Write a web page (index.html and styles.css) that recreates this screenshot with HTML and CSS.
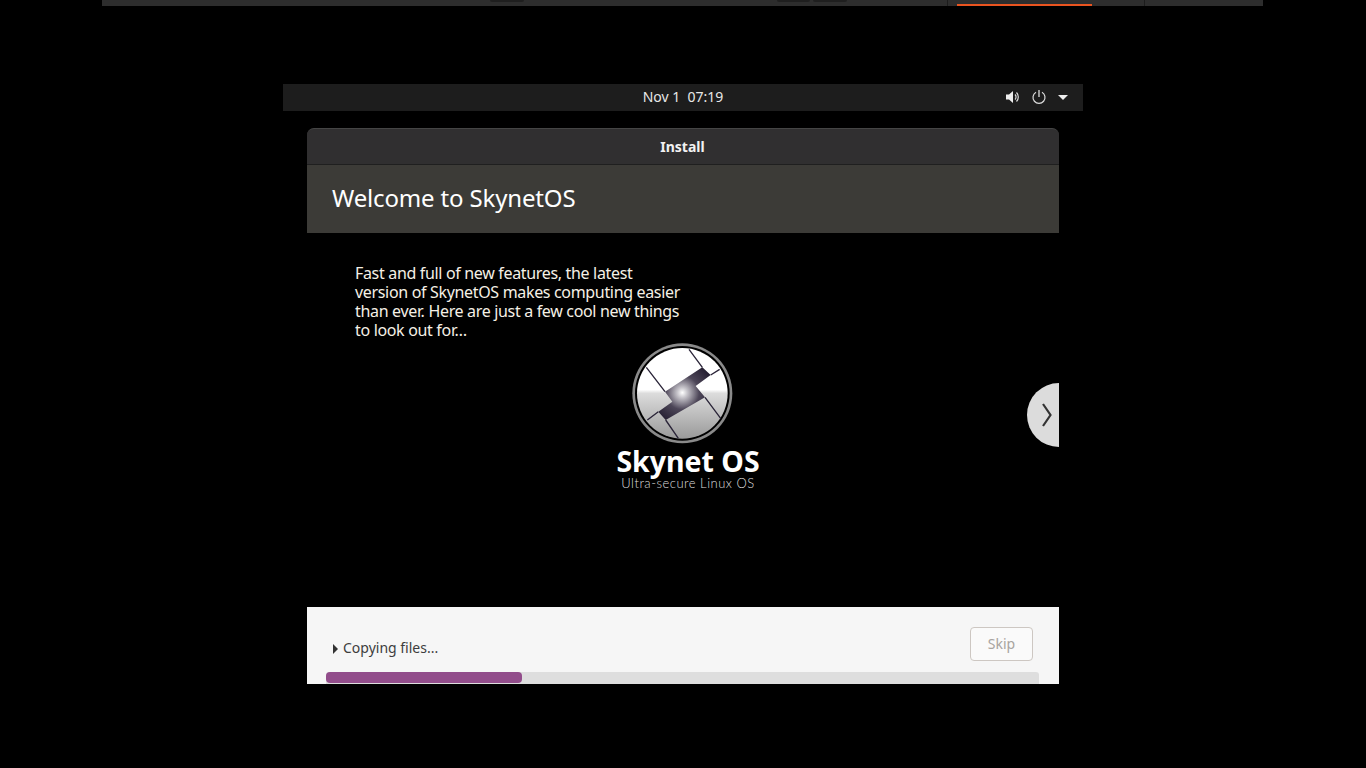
FILE: index.html
```html
<!DOCTYPE html>
<html lang="en">
<head>
    <meta charset="UTF-8">
    <title>Install - SkynetOS</title>
    <link rel="stylesheet" href="styles.css">
</head>
<body>

    <div class="top-strip">
        <div class="notch notch-a"></div>
        <div class="notch notch-b"></div>
        <div class="notch notch-c"></div>
        <div class="tab-box"></div>
        <div class="active-tab"></div>
    </div>

    <div class="screen">
        <div class="panel">
            <span class="clock">Nov 1&nbsp; 07:19</span>
            <div class="tray">
                <svg width="16" height="16" viewBox="0 0 16 16">
                    <path d="M1 5.5h3L8 2v12L4 10.5H1z" fill="#eee"/>
                    <path d="M10 5.5a3.5 3.5 0 0 1 0 5M11.5 3.5a6.5 6.5 0 0 1 0 9" fill="none" stroke="#ddd" stroke-width="1.2"/>
                </svg>
                <svg width="16" height="16" viewBox="0 0 16 16">
                    <path d="M5 3.2a6 6 0 1 0 6 0" fill="none" stroke="#ddd" stroke-width="1.2"/>
                    <path d="M8 1v7" fill="none" stroke="#eee" stroke-width="1.2"/>
                </svg>
                <span class="caret"></span>
            </div>
        </div>

        <div class="window">
            <div class="titlebar">Install</div>
            <div class="page-head">Welcome to SkynetOS</div>

            <div class="slide">
                <p class="slide-text">Fast and full of new features, the latest version of SkynetOS makes computing easier than ever. Here are just a few cool new things to look out for…</p>

                <div class="logo">
                    <svg class="logo-mark" width="108" height="106" viewBox="0 0 324 318">
                        <defs>
                            <linearGradient id="disc" x1="0" y1="0" x2="0" y2="1">
                                <stop offset="0" stop-color="#fff"/>
                                <stop offset="0.46" stop-color="#fff"/>
                                <stop offset="0.5" stop-color="#dcdcdc"/>
                                <stop offset="1" stop-color="#9a9a9a"/>
                            </linearGradient>
                            <radialGradient id="glow" gradientUnits="userSpaceOnUse" cx="160" cy="158" r="105">
                                <stop offset="0" stop-color="#fff"/>
                                <stop offset="0.14" stop-color="#c8c6cc"/>
                                <stop offset="0.48" stop-color="#4d4658"/>
                                <stop offset="1" stop-color="#1f192c"/>
                            </radialGradient>
                        </defs>
                        <circle cx="160" cy="160" r="150" fill="#8a8a8a"/>
                        <circle cx="160" cy="160" r="142" fill="#000"/>
                        <circle cx="160" cy="160" r="136" fill="url(#disc)"/>
                        <path d="M220 82L245 105L200 138L228 172L110 240L88 215L130 185L108 155z" fill="url(#glow)"/>
                        <path d="M52 82L108 155M180 28L220 82M245 105L272 88M88 215L55 240M110 240L148 295M228 172L275 235" fill="none" stroke="#2a2438" stroke-width="4"/>
                    </svg>
                    <div class="logo-name">Skynet OS</div>
                    <div class="logo-tag">Ultra-secure Linux OS</div>
                </div>

                <div class="next-btn">
                    <svg width="12" height="26" viewBox="0 0 12 26">
                        <path d="M2 2L9.5 13L2 24" fill="none" stroke="#333" stroke-width="2.2"/>
                    </svg>
                </div>
            </div>

            <div class="footer">
                <div class="footer-row">
                    <div class="progress-label"><span class="arrow"></span>Copying files...</div>
                    <button class="skip-btn">Skip</button>
                </div>
                <div class="progress">
                    <div class="progress-fill" style="width: 27.5%"></div>
                </div>
            </div>
        </div>
    </div>

</body>
</html>
```

FILE: styles.css
```css
* {
    box-sizing: border-box;
    margin: 0;
    padding: 0;
}

body {
    font-family: "Noto Sans", sans-serif;
    background-color: #000;
    color: #fff;
    overflow: hidden;
}

.top-strip {
    position: relative;
    width: 1161px;
    height: 6px;
    margin-left: 102px;
    background-color: #2d2d2d;
}

.notch {
    position: absolute;
    top: 0;
    height: 2px;
    background-color: #1f1f1f;
    border-radius: 0 0 4px 4px;
}

.notch-a {
    left: 388px;
    width: 34px;
}

.notch-b {
    left: 675px;
    width: 33px;
}

.notch-c {
    left: 711px;
    width: 34px;
}

.tab-box {
    position: absolute;
    left: 845px;
    top: 0;
    width: 198px;
    height: 6px;
    border-left: 1px solid #1c1c1c;
    border-right: 1px solid #1c1c1c;
}

.active-tab {
    position: absolute;
    left: 855px;
    bottom: 0;
    width: 135px;
    height: 2px;
    background-color: #e95420;
}

.screen {
    width: 800px;
    margin: 78px auto 0;
}

.panel {
    position: relative;
    display: flex;
    align-items: center;
    justify-content: center;
    height: 27px;
    padding-bottom: 2px;
    background-color: #1d1d1d;
    font-size: 14px;
    color: #e8e8e8;
}

.tray {
    position: absolute;
    right: 15px;
    top: 0;
    height: 26px;
    display: flex;
    align-items: center;
    gap: 10px;
}

.caret {
    width: 0;
    height: 0;
    margin-left: 1px;
    border-left: 5px solid transparent;
    border-right: 5px solid transparent;
    border-top: 5px solid #eee;
}

.window {
    width: 752px;
    margin: 17px auto 0;
}

.titlebar {
    height: 37px;
    line-height: 36px;
    text-align: center;
    font-size: 14px;
    font-weight: 700;
    color: #f2f2f2;
    padding-right: 1px;
    background-color: #302f30;
    border-top: 1px solid #454545;
    border-bottom: 1px solid #1f1f1f;
    border-radius: 7px 7px 0 0;
}

.page-head {
    height: 68px;
    line-height: 65px;
    padding-left: 25px;
    font-size: 24px;
    letter-spacing: -0.16px;
    background-color: #3c3b37;
}

.slide {
    position: relative;
    height: 374px;
    background-color: #000;
}

.slide-text {
    width: 330px;
    padding: 31px 0 0 48px;
    box-sizing: content-box;
    font-size: 16px;
    line-height: 19px;
    letter-spacing: -0.33px;
    color: #f5f0e6;
}

.logo {
    display: flex;
    flex-direction: column;
    align-items: center;
    margin-top: 0;
    margin-left: 10px;
}

.logo-mark {
    margin-left: -11px;
}

.logo-name {
    font-size: 28.5px;
    line-height: 30px;
    font-weight: 700;
    color: #fff;
}

.logo-tag {
    font-family: "Lato", sans-serif;
    font-weight: 300;
    font-size: 13px;
    line-height: 14px;
    letter-spacing: 0.5px;
    color: #ddd;
}

.next-btn {
    position: absolute;
    right: 0;
    top: 150px;
    width: 32px;
    height: 64px;
    padding-left: 8px;
    display: flex;
    align-items: center;
    justify-content: center;
    background-color: #dcdcdc;
    border-radius: 32px 0 0 32px;
}

.footer {
    height: 77px;
    padding: 20px 20px 0 19px;
    background-color: #f6f6f6;
}

.footer-row {
    display: flex;
    justify-content: space-between;
    align-items: flex-start;
    height: 45px;
    margin-right: 6px;
}

.progress-label {
    display: flex;
    align-items: center;
    margin-top: 11px;
    padding-left: 6px;
    font-size: 14px;
    color: #3d3d3d;
}

.arrow {
    width: 0;
    height: 0;
    margin: 2px 5px 0 1px;
    border-top: 5px solid transparent;
    border-bottom: 5px solid transparent;
    border-left: 5px solid #333;
}

.skip-btn {
    width: 63px;
    height: 34px;
    padding-bottom: 2px;
    font-family: "Noto Sans", sans-serif;
    font-size: 14px;
    color: #a8a4a0;
    background-color: #fafafa;
    border: 1px solid #cdc7c2;
    border-radius: 4px;
}

.progress {
    height: 12px;
    background-color: #dedede;
    border-radius: 3px 3px 0 0;
}

.progress-fill {
    height: 11px;
    background-color: #924d8b;
    border-radius: 4px;
}
```
